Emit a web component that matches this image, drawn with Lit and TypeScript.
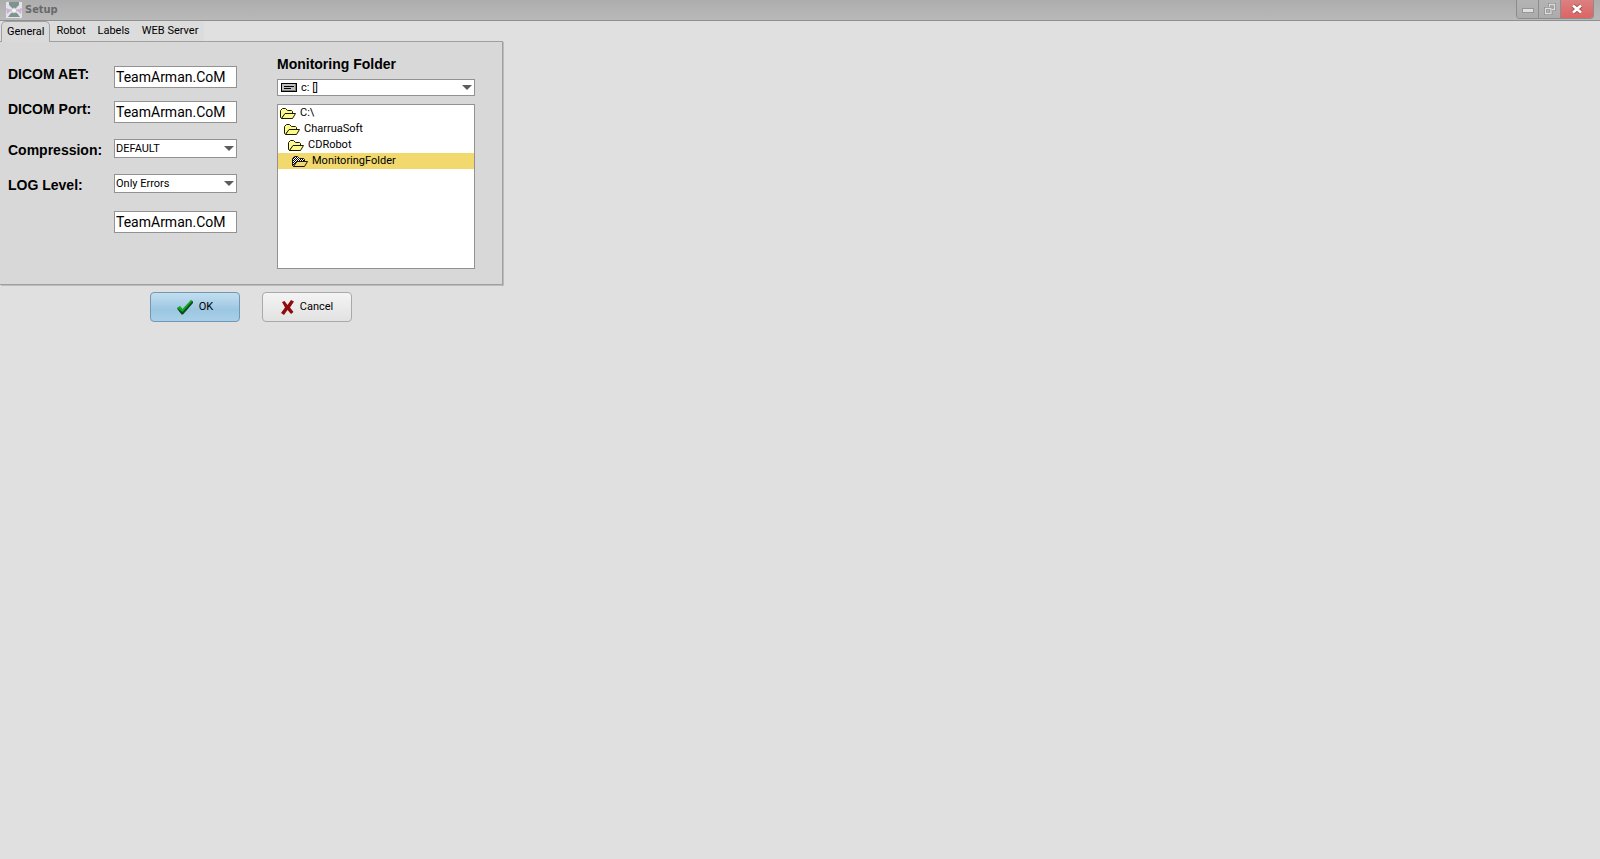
import { LitElement, html, css, svg } from 'lit';
import { customElement, state } from 'lit/decorators.js';

const folder = (current: boolean) => svg`
  <svg class="folder" viewBox="0 0 16 13" width="16" height="13" aria-hidden="true">
    <defs>
      <pattern id="dither" width="2" height="2" patternUnits="userSpaceOnUse">
        <rect width="2" height="2" fill="#fff"/><rect width="1" height="1" fill="#000"/><rect x="1" y="1" width="1" height="1" fill="#000"/>
      </pattern>
    </defs>
    <path d="M1.500 11.500L.5 10.500V3.500L2.500 1.500H5.500L7.500 3.500H11.500L12.500 4.500V6.500L4.500 7.500Z" fill=${current ? 'url(#dither)' : '#fdfa8c'} stroke="#1a1a00"/>
    <path d="M1.500 11.500L5 6.500H15.500L12.500 11.500Z" fill=${current ? '#f0d878' : '#fdfa8c'} stroke="#1a1a00"/>
  </svg>`;

@customElement('app-root')
export class AppRoot extends LitElement {
  @state() private tab = 'General';
  @state() private selected = 3;

  private tabs = ['General', 'Robot', 'Labels', 'WEB Server'];
  private folders = ['C:\\', 'CharruaSoft', 'CDRobot', 'MonitoringFolder'];

  static styles = css`
    :host {
      display: block;
      min-height: 100vh;
      background: #e0e0e0;
      color: #000;
      font: 11px/16px Roboto, "Liberation Sans", sans-serif;
    }
    * { box-sizing: border-box; }
    button, input, select { font: inherit; color: inherit; margin: 0; border-radius: 0; }
    .titlebar {
      display: flex;
      align-items: flex-start;
      height: 21px;
      padding: 0 6px;
      background: linear-gradient(#adadad, #b9b9b9);
      border-bottom: 1px solid #8f8f8f;
    }
    .app-icon { margin: 2px 3px 0 0; }
    .title {
      flex: 1;
      margin: 0;
      font: bold 11px/20px "DejaVu Sans Condensed", "DejaVu Sans", sans-serif;
      color: #696969;
    }
    .window-buttons { display: flex; border: 1px solid #8c8c8c; border-top: 0; border-radius: 0 0 4px 4px; overflow: hidden; }
    .window-button {
      display: grid;
      place-items: center;
      width: 22px;
      height: 18px;
      padding: 0;
      border: 0;
      border-right: 1px solid #8c8c8c;
      background: linear-gradient(#b4b4b4, #acacac);
    }
    .window-button.close { width: 32px; border: 0; background: linear-gradient(#dc8080, #dc6464); }
    .tabs { display: flex; align-items: flex-end; height: 20px; }
    .tab {
      height: 20px;
      padding: 0 6px;
      border: 0;
      background: #dcdcdc;
    }
    .tab.active {
      height: 21px;
      margin: 0 0 -1px 1px;
      padding: 0 5px 1px;
      border: 1px solid #a0a0a0;
      border-bottom: 0;
      border-radius: 5px 5px 0 0;
      background: #dadada;
      z-index: 1;
    }
    .panel {
      display: flex;
      gap: 40px;
      width: fit-content;
      padding: 14px 27px 15px 8px;
      background: #d8d8d8;
      border: 1px solid #a0a0a0;
      border-left: 0;
      box-shadow: 1px 1px #bcbcbc;
    }
    .fields { display: grid; grid-template-columns: 106px 123px; align-content: start; row-gap: 13px; padding-top: 10px; }
    .field { display: grid; grid-template-columns: subgrid; grid-column: span 2; align-items: start; }
    .field.choice { align-items: end; margin-top: 3px; }
    .field.extra { margin-top: 5px; }
    .label { margin: 0; font: bold 14px/16px "Liberation Sans", sans-serif; }
    .text, .select, .list { border: 1px solid #929292; background: #fff; }
    .text {
      grid-column: 2;
      width: 100%;
      height: 22px;
      padding: 0 1px;
      font: 14px/20px Roboto, "Liberation Sans", sans-serif;
    }
    .select { appearance: none; width: 100%; height: 19px; padding: 0 20px 0 1px; }
    .select-box { display: grid; align-items: center; }
    .select-box > * { grid-area: 1 / 1; }
    .arrow { justify-self: end; margin-right: 3px; pointer-events: none; }
    .drive { margin-left: 4px; pointer-events: none; }
    .select.drives { height: 17px; padding-left: 23px; }
    .monitor { display: flex; flex-direction: column; width: 198px; }
    .monitor .label { margin-bottom: 7px; }
    .list { height: 165px; margin: 8px 0 0; padding: 0; list-style: none; }
    .item { display: flex; align-items: center; gap: 4px; height: 16px; }
    .item.selected { background: #f2d96e; }
    .actions { display: flex; gap: 22px; padding: 7px 150px; }
    .action {
      display: flex;
      align-items: center;
      justify-content: center;
      gap: 6px;
      width: 90px;
      height: 30px;
      padding: 0;
      border: 1px solid #a9a9a9;
      border-radius: 4px;
      background: linear-gradient(#f4f4f4, #e2e2e2);
    }
    .action.primary { border-color: #7297b5; background: linear-gradient(#c3dff0, #9cc6e2 60%, #a9d0e8); }
  `;

  private arrow() {
    return html`<svg class="arrow" width="10" height="5" viewBox="0 0 10 5" aria-hidden="true"><path d="M0 0H10L5 5Z" fill="#5c5c5c"/></svg>`;
  }

  render() {
    return html`
      <header class="titlebar">
        <svg class="app-icon" width="16" height="16" viewBox="0 0 16 16" aria-hidden="true">
          <rect width="16" height="16" fill="#e4e4e6"/>
          <path d="M3 0H13V3L10 6H6L3 3Z" fill="#7f9292"/>
          <path d="M0 6L6 8L1 12Z" fill="#cdb0dc"/><path d="M16 6L10 8L15 12Z" fill="#cdb0dc"/>
          <path d="M2 15L5 11H11L14 15Z" fill="#7f9292"/>
          <circle cx="8" cy="8.500" r="2.500" fill="#f6f6f6" stroke="#b4c4c4"/>
        </svg>
        <h1 class="title">Setup</h1>
        <div class="window-buttons">
          <button class="window-button" aria-label="Minimize"><svg width="12" height="12" viewBox="0 0 12 12"><rect x=".5" y="5.500" width="11" height="4" fill="#e0e0e0" stroke="#969696"/></svg></button>
          <button class="window-button" aria-label="Restore"><svg width="12" height="12" viewBox="0 0 12 12" fill="none"><path d="M5.500 4V1.500H10.500V6.500H8M1.500 5.500H7V10.500H1.500Z" stroke="#929292" stroke-width="3"/><path d="M5.500 4V1.500H10.500V6.500H8M1.500 5.500H7V10.500H1.500Z" stroke="#dcdcdc" stroke-width="1.300"/></svg></button>
          <button class="window-button close" aria-label="Close"><svg width="12" height="12" viewBox="0 0 12 12"><path d="M2 2.500L10 9.500M10 2.500L2 9.500" stroke="#a85050" stroke-width="4.500"/><path d="M2 2.500L10 9.500M10 2.500L2 9.500" stroke="#fff" stroke-width="2.600"/></svg></button>
        </div>
      </header>
      <nav class="tabs" role="tablist">
        ${this.tabs.map((t) => html`<button role="tab" class="tab ${t === this.tab ? 'active' : ''}" aria-selected=${t === this.tab} @click=${() => (this.tab = t)}>${t}</button>`)}
      </nav>
      <main>
        <section class="panel">
          <div class="fields">
            <div class="field"><label class="label" for="aet">DICOM AET:</label><input class="text" id="aet" value="TeamArman.CoM"></div>
            <div class="field"><label class="label" for="port">DICOM Port:</label><input class="text" id="port" value="TeamArman.CoM"></div>
            <div class="field choice"><label class="label" for="compression">Compression:</label>
              <div class="select-box"><select class="select" id="compression"><option>DEFAULT</option></select>${this.arrow()}</div></div>
            <div class="field choice"><label class="label" for="log">LOG Level:</label>
              <div class="select-box"><select class="select" id="log"><option>Only Errors</option></select>${this.arrow()}</div></div>
            <div class="field extra"><input class="text" aria-label="Value" value="TeamArman.CoM"></div>
          </div>
          <div class="monitor">
            <label class="label" for="drive">Monitoring Folder</label>
            <div class="select-box"><select class="select drives" id="drive"><option>c: []</option></select>
              <svg class="drive" width="16" height="9" viewBox="0 0 16 9" shape-rendering="crispEdges" aria-hidden="true"><rect width="16" height="9" fill="#000"/><rect x="1" y="1" width="14" height="7" fill="#808080"/><rect x="1" y="1" width="13" height="6" fill="#c0c0c0"/><path d="M3 3.500H13M3 5.500H10" stroke="#000"/></svg>
              ${this.arrow()}</div>
            <ul class="list" role="listbox" aria-label="Monitoring Folder">
              ${this.folders.map((f, i) => html`<li role="option" class="item ${i === this.selected ? 'selected' : ''}" aria-selected=${i === this.selected} style="padding-left:${2 + i * 4}px" @click=${() => (this.selected = i)}>${folder(i === 3)}<span>${f}</span></li>`)}
            </ul>
          </div>
        </section>
        <div class="actions">
          <button class="action primary"><svg width="16" height="15" viewBox="0 0 16 15" aria-hidden="true"><path d="M0 8.500L3 6.500L5.500 9.500L14 .5L16 1.500V3L6 14.500H4.500Z" fill="#0a4a1c"/><path d="M0 8L3 6L5.500 9L14 0L15.500 1L5.500 12Z" fill="#14a81e"/></svg>OK</button>
          <button class="action"><svg width="13" height="15" viewBox="0 0 13 15" aria-hidden="true"><path d="M1 2L3.500 1L6.500 5L10 0L13 1.500L9 7.500L12.500 12L10 14L6.500 10L3 15L0 13L4 7.500Z" fill="#8e0c0c"/></svg>Cancel</button>
        </div>
      </main>`;
  }
}
